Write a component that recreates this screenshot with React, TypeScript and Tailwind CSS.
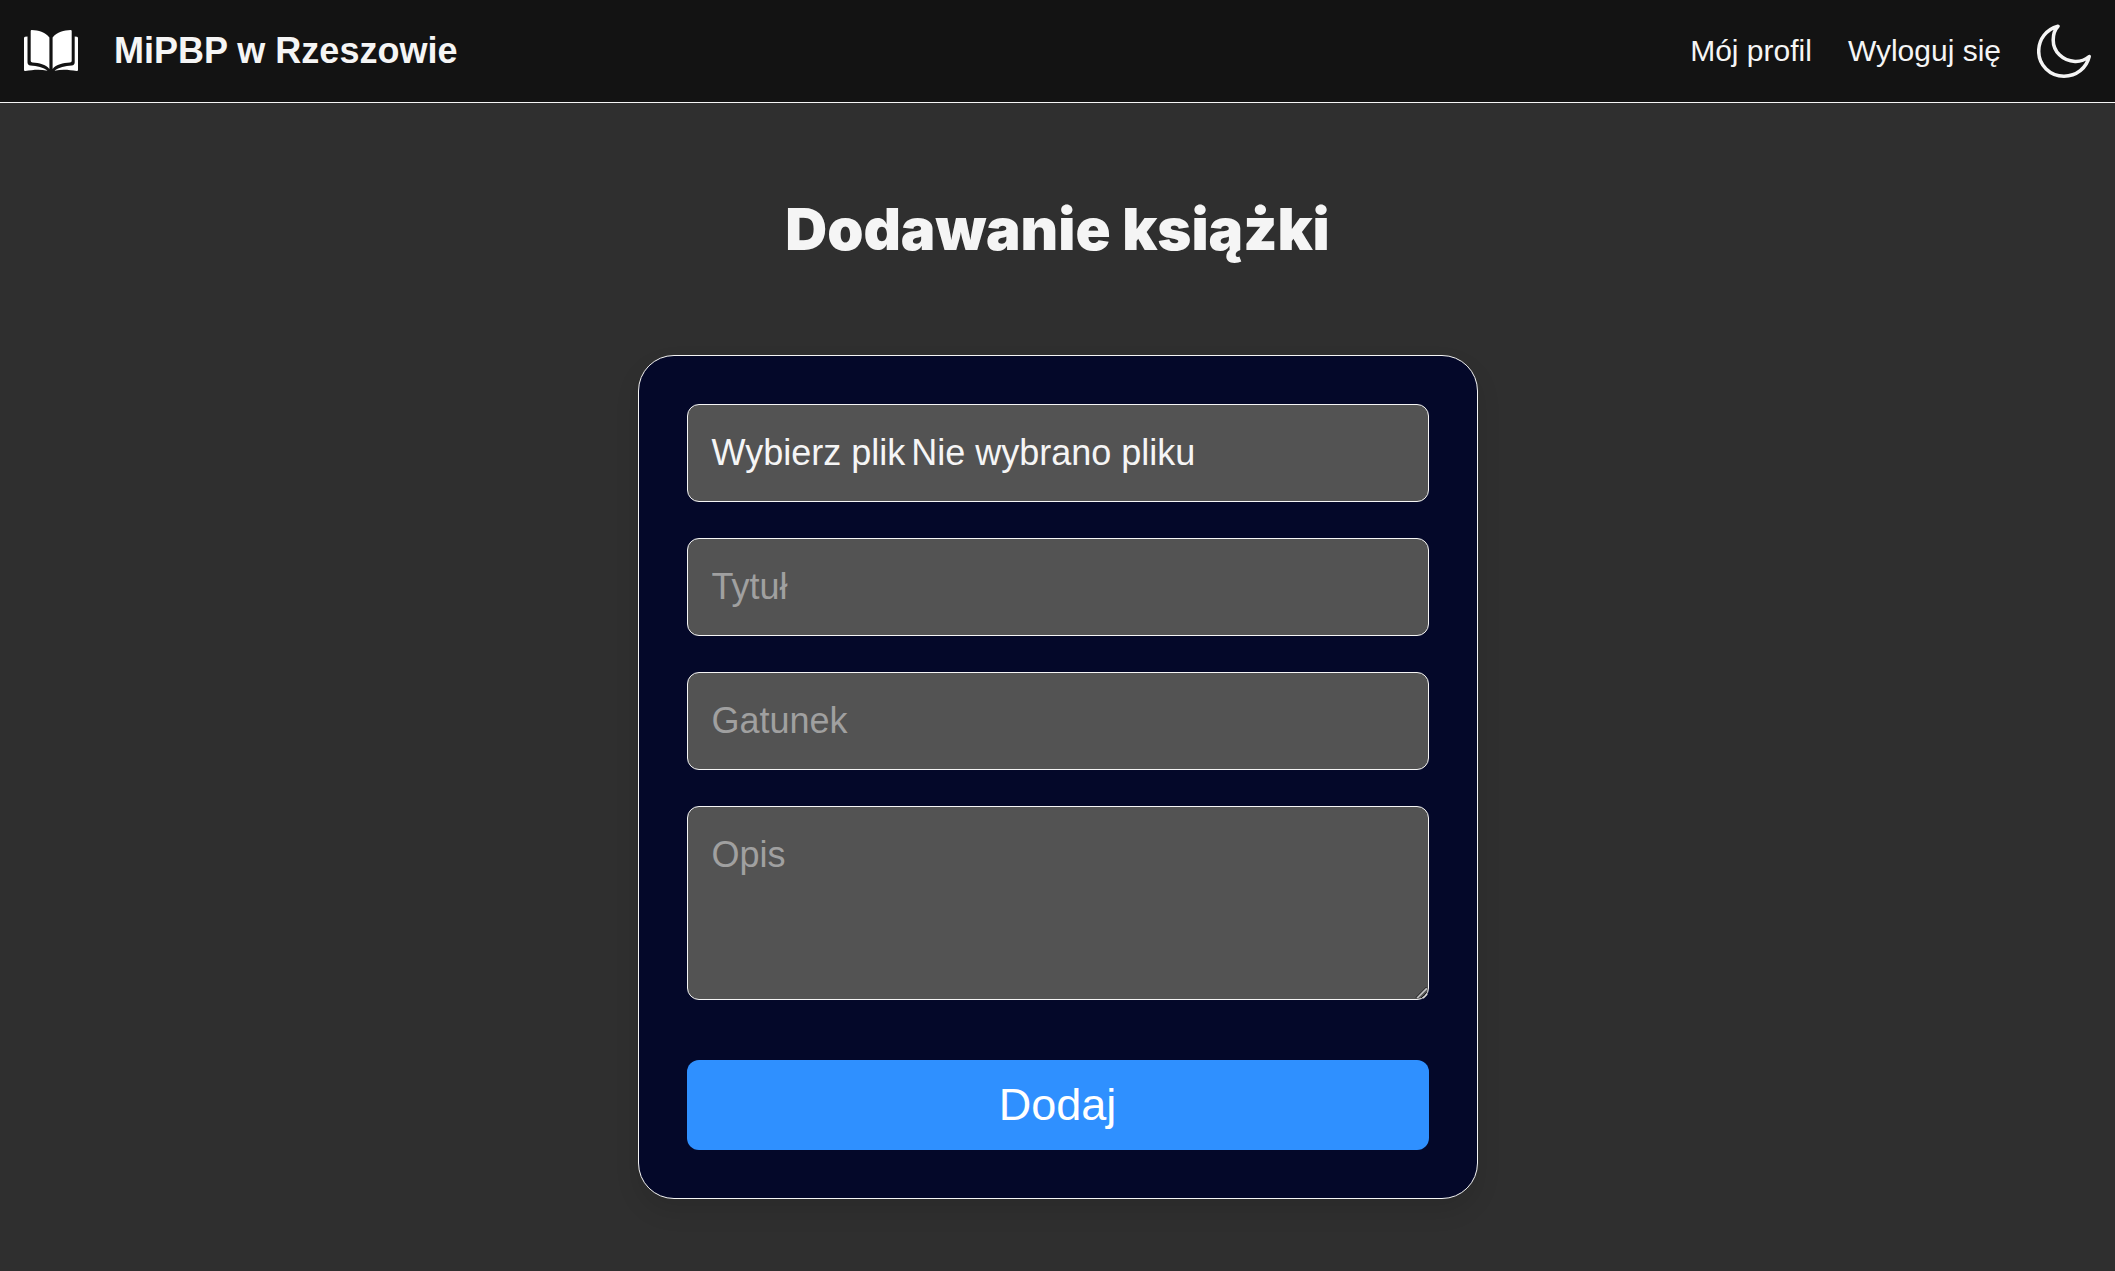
import { useState } from "react";

const fieldClass =
  "block w-full rounded-xl border border-[#f5f5f5] bg-[#535353] p-6 text-4xl leading-[48px] text-[#f5f5f5] placeholder:text-[#a0a0a0] outline-none focus:border-[#2f90ff]";

function BookIcon() {
  return (
    <svg viewBox="0 0 54 54" className="size-[54px] fill-white" aria-hidden="true">
      <path d="M6.700 7Q6.700 6 7.700 6C14.500 6.200 21 8 25.400 13.500V45C21.500 40.500 15.500 39.200 8.500 38.600Q6.700 38.400 6.700 37Z" />
      <path d="M47.700 7Q47.700 6 46.700 6C40 6.200 33 8 28.600 13.500V45C32.300 40.500 38.800 39.200 46 38.600Q47.700 38.400 47.700 37Z" />
      <path d="M0 14Q0 13 1 12.800L3.500 12.500V38.300Q3.500 41.300 6.500 41.600C13 42.300 19.500 43.300 23.500 46.700C16 44.900 8.500 45.700 1.400 47Q0 47.200 0 46Z" />
      <path d="M54 14Q54 13 53 12.800L50.700 12.500V38.300Q50.700 41.300 47.700 41.600C41.300 42.300 34.800 43.300 30.500 46.700C38 44.900 45.500 45.700 52.600 47Q54 47.200 54 46Z" />
    </svg>
  );
}

function MoonIcon() {
  return (
    <svg
      viewBox="0 0 54 54"
      className="size-[54px] fill-none stroke-[#f5f5f5] stroke-[3.5]"
      strokeLinejoin="round"
      aria-hidden="true"
    >
      <path d="M21 2.300C9 5.500 1.700 15.500 1.700 27.200C1.700 41.200 13 52.200 27 52.200C39.500 52.200 49.500 44 52.200 32.500C47.500 36.300 42.500 37.600 38 37.400C25.500 37 16.200 27.500 16.200 16C16.200 10.500 17.500 6 21 2.300Z" />
    </svg>
  );
}

function ResizeGrip() {
  return (
    <svg
      viewBox="0 0 14 14"
      className="pointer-events-none absolute right-0 bottom-0 size-[14px] fill-none"
      aria-hidden="true"
    >
      <path d="M1 11.500L11.500 1M6 12L11.500 6.500" stroke="#1c1c1c" />
      <path d="M2.200 12L11.800 2.400" stroke="#c4c4c4" strokeWidth="1.600" />
      <path d="M8 12.200L12.200 8" stroke="#d8d8d8" strokeWidth="1.600" />
    </svg>
  );
}

function Header() {
  return (
    <header className="flex items-center justify-between border-b border-[#f5f5f5] bg-[#131313] p-6">
      <a href="#" className="flex items-center gap-9 text-4xl font-bold">
        <BookIcon />
        MiPBP w Rzeszowie
      </a>
      <nav className="flex items-center gap-9 text-3xl">
        <a href="#profil">Mój profil</a>
        <a href="#wyloguj">Wyloguj się</a>
        <button type="button" aria-label="Zmień motyw">
          <MoonIcon />
        </button>
      </nav>
    </header>
  );
}

function BookForm() {
  const [fileName, setFileName] = useState("Nie wybrano pliku");

  return (
    <form
      onSubmit={(e) => e.preventDefault()}
      className="flex w-full max-w-[840px] flex-col gap-9 rounded-[36px] border border-[#f5f5f5] bg-[#040829] p-12 shadow-[0_12px_24px_rgba(0,0,0,0.1)]"
    >
      <label className={fieldClass + " flex cursor-pointer gap-[6px]"}>
        <input
          type="file"
          className="sr-only"
          onChange={(e) => setFileName(e.target.files?.[0]?.name ?? "Nie wybrano pliku")}
        />
        <span>Wybierz plik</span>
        <span>{fileName}</span>
      </label>
      <input type="text" aria-label="Tytuł" placeholder="Tytuł" className={fieldClass} />
      <input type="text" aria-label="Gatunek" placeholder="Gatunek" className={fieldClass} />
      <div className="relative">
        <textarea
          aria-label="Opis"
          placeholder="Opis"
          rows={3}
          className={fieldClass + " resize-y [&::-webkit-resizer]:bg-transparent"}
        />
        <ResizeGrip />
      </div>
      <button
        type="submit"
        className="mt-6 rounded-xl bg-[#2f90ff] px-6 py-3 text-[45px] leading-[66px] text-white"
      >
        Dodaj
      </button>
    </form>
  );
}

export default function App() {
  return (
    <div className="flex min-h-screen flex-col bg-[#2f2f2f] font-['Liberation_Sans',Arial,sans-serif] text-[#f5f5f5]">
      <Header />
      <main className="flex flex-1 flex-col items-center px-6 pb-16">
        <h1 className="py-[90px] font-['Arial_Black','Inter',sans-serif] text-[58px] leading-[72px] font-black">
          Dodawanie książki
        </h1>
        <BookForm />
      </main>
    </div>
  );
}
